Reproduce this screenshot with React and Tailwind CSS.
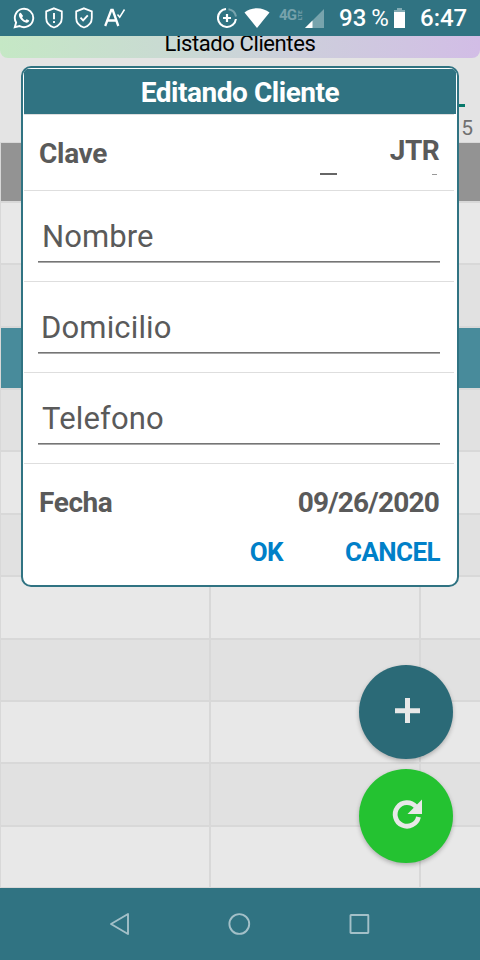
const rows = [
  { h: 'h-[60px]', tone: 'light' },
  { h: 'h-[61px]', tone: 'dark' },
  { h: 'h-[60px]', tone: 'selected' },
  { h: 'h-[60px]', tone: 'dark' },
  { h: 'h-[61px]', tone: 'light' },
  { h: 'h-[60px]', tone: 'dark' },
  { h: 'h-[61px]', tone: 'light' },
  { h: 'h-[60px]', tone: 'dark' },
  { h: 'h-[60px]', tone: 'light' },
  { h: 'h-[61px]', tone: 'dark' },
  { h: 'h-[60px]', tone: 'light' },
];

const tones = {
  light: 'bg-[#e8e8e8]',
  dark: 'bg-[#e1e1e1]',
  selected: 'bg-[#488b9b]',
};

const fields = [
  { label: 'Nombre', className: 'pl-[4px] tracking-[0.1px]' },
  { label: 'Domicilio', className: 'pl-[3px] tracking-[0.15px]' },
  { label: 'Telefono', className: 'pl-[4px] tracking-[0.15px]' },
];

function StatusBar() {
  return (
    <header className="flex h-9 shrink-0 items-center bg-[#307382] pl-[13px] pr-[13px] text-white">
      <svg className="h-[22px] w-[22px]" viewBox="0 0 22 22" fill="none" stroke="currentColor">
        <path d="M1.8 20.2 3.1 15.6A9.2 9.2 0 1 1 6.6 19Z" strokeWidth="1.9" />
        <path
          d="M7.8 5.8c-.5-.3-1.8.4-1.9 2-.2 3.2 4 7.6 7.500 7.9 1.6.1 2.7-.9 2.8-2.1l-2.5-1.400-1.3 1.3c-1.4-.5-2.7-1.8-3.3-3.2l1-1.3Z"
          fill="currentColor"
          stroke="none"
        />
      </svg>
      <svg className="ml-[10px] h-[22px] w-[18px]" viewBox="0 0 18 22" fill="none" stroke="currentColor" strokeWidth="1.8">
        <path d="M9 1.3 16.8 4.3V11c0 4.5-3.1 8-7.8 9.5C4.3 19 1.2 15.500 1.2 11V4.3Z" />
        <path d="M9 6v6.3M9 14v2" strokeWidth="1.9" />
      </svg>
      <svg className="ml-[12px] h-[22px] w-[18px]" viewBox="0 0 18 22" fill="none" stroke="currentColor" strokeWidth="1.8">
        <path d="M9 1.3 16.8 4.3V11c0 4.5-3.1 8-7.8 9.5C4.3 19 1.2 15.500 1.2 11V4.3Z" />
        <path d="m5.5 10.7 2.600 2.6 4.700-5" strokeWidth="1.9" />
      </svg>
      <svg className="ml-[11px] h-[20px] w-[22px]" viewBox="0 0 22 20" fill="none" stroke="currentColor">
        <path d="M1.200 18 7.300 2h1.400L14.300 18M3.700 12.500h8.200" strokeWidth="2.300" />
        <path d="m13.500 6.500 2.200 2.700L20.500 1.500" strokeWidth="1.500" />
      </svg>

      <svg className="ml-auto h-[20px] w-[20px]" viewBox="0 0 20 20" fill="none" stroke="currentColor" strokeWidth="2.100">
        <path d="M9 1a9 9 0 1 0 9.900 10" />
        <path d="M11.500 1.200A9 9 0 0 1 19 8.500" opacity=".35" />
        <path d="M10 6v8M6 10h8" strokeWidth="2.200" />
      </svg>
      <svg className="ml-[7px] h-[20px] w-[26px]" viewBox="0 0 26 20" fill="currentColor">
        <path d="M13 20 .5 4.600C3.800 1.900 8.200.3 13 .3s9.200 1.600 12.500 4.300Z" />
      </svg>
      <div className="ml-[9px] flex h-[20px] w-[26px] items-start text-white/35">
        <span className="text-[15px] font-bold leading-[14px] -tracking-[0.8px]">4G</span>
        <span className="text-[6px] font-bold leading-[7px] [writing-mode:vertical-rl] rotate-180 h-[12px]">LTE</span>
      </div>
      <svg className="h-[19px] w-[19px]" viewBox="0 0 19 19" fill="currentColor">
        <path d="M19 0v19H0Z" opacity=".35" />
        <path d="M7.500 11.500V19H0Z" />
      </svg>
      <span className="ml-[15px] w-[53px] whitespace-nowrap text-[24px] font-medium leading-9">
        93 <span className="-ml-px font-normal">%</span>
      </span>
      <svg className="ml-[2px] h-[20px] w-[11px]" viewBox="0 0 11 20" fill="currentColor">
        <path d="M3 0h5v2h3v2H0V2h3Z" opacity=".4" />
        <path d="M0 4h11v16H0Z" />
      </svg>
      <span className="ml-[15px] w-[47px] whitespace-nowrap text-[24px] font-medium leading-9">6:47</span>
    </header>
  );
}

function Grid() {
  return (
    <div className="flex flex-col border-l border-t border-[#d8d8d8] bg-[#d8d8d8]">
      <div className="mb-[2px] h-[58px] bg-[#939393]" />
      {rows.map((row, i) => (
        <div key={i} className={`mb-[2px] flex shrink-0 gap-[2px] last:mb-px ${row.h}`}>
          <div className={`w-[208px] ${tones[row.tone]}`} />
          <div className={`w-[208px] ${tones[row.tone]}`} />
          <div className={`flex-1 ${tones[row.tone]}`} />
        </div>
      ))}
    </div>
  );
}

function EditDialog() {
  return (
    <div className="absolute left-[21px] top-[66px] h-[521px] w-[438px] overflow-hidden rounded-[10px] border-2 border-[#307382] bg-white px-px text-[#5a5a5a]">
      <h2 className="h-[46px] bg-[#307382] text-center text-[28px] font-bold leading-[49px] text-white shadow-[inset_0_1px_0_#fff]">
        <span className="-tracking-[0.47px]">Editando Cliente</span>
      </h2>
      <div className="mr-[2px] flex h-[77px] justify-between border-y border-[#dedede] pl-[15px] pr-[14px] text-[28px] font-bold">
        <span className="-tracking-[0.3px] leading-[77px]">Clave</span>
        <div className="flex w-[120px] flex-col items-end">
          <span className="mr-px mt-[19px] leading-[33px] -tracking-[0.6px]">JTR</span>
          <div className="mt-[6px] flex w-full items-start justify-between pr-[3px]">
            <i className="h-[2px] w-[17px] bg-[#666]" />
            <i className="mt-px h-px w-[5px] bg-[#999]" />
          </div>
        </div>
      </div>
      {fields.map((field) => (
        <div key={field.label} className="mr-[2px] h-[91px] border-b border-[#dedede] pl-[14px] pr-[14px]">
          <div className="h-[72px] border-b border-[#a9a9a9]">
            <div className="h-[71px] border-b border-[#757575]">
              <span className={`block text-[31px] leading-[92px] ${field.className}`}>{field.label}</span>
            </div>
          </div>
        </div>
      ))}
      <div className="flex h-[77px] justify-between pl-[15px] pr-[17px] text-[28px] font-bold leading-[78px]">
        <span className="-tracking-[0.4px]">Fecha</span>
        <span className="-tracking-[0.8px]">09/26/2020</span>
      </div>
      <div className="flex justify-end gap-[62px] pr-[16px] text-[26px] font-bold leading-[22px] text-[#0080c8]">
        <button className="-tracking-[0.6px]">OK</button>
        <button className="-tracking-[0.6px]">CANCEL</button>
      </div>
    </div>
  );
}

export default function App() {
  return (
    <div className="relative flex h-[960px] w-[480px] flex-col overflow-hidden bg-[#e4e4e4] font-['Roboto',sans-serif]">
      <StatusBar />
      <div className="flex h-[22px] shrink-0 justify-center overflow-hidden rounded-b-[8px] bg-linear-to-r from-[#c5e8c5] via-[#cbd4d8] to-[#d2bde6]">
        <h1 className="-mt-[8px] text-[22px] leading-[32px] -tracking-[0.4px] text-black">Listado Clientes</h1>
      </div>
      <div className="flex h-[84px] shrink-0 flex-col items-end">
        <div className="mr-[15px] mt-[46px] h-[3px] w-[200px] shrink-0 bg-[#08796b]" />
        <span className="mr-[7px] mt-[8px] text-[21px] leading-[26px] text-[#707070]">5</span>
      </div>
      <Grid />
      <nav className="flex h-[72px] shrink-0 items-center bg-[#307382] pl-[109px] text-[#a3c0c8]">
        <svg className="h-[24px] w-[22px]" viewBox="0 0 22 24" fill="none" stroke="currentColor" strokeWidth="1.900">
          <path d="M19 2v20L2 12Z" strokeLinejoin="round" />
        </svg>
        <svg className="ml-[96px] h-[24px] w-[24px]" viewBox="0 0 24 24" fill="none" stroke="currentColor" strokeWidth="1.900">
          <circle cx="12.300" cy="12" r="9.900" />
        </svg>
        <svg className="ml-[96px] h-[24px] w-[24px]" viewBox="0 0 24 24" fill="none" stroke="currentColor" strokeWidth="1.900">
          <rect x="3.500" y="3" width="17.800" height="18" rx="0.500" />
        </svg>
      </nav>

      <EditDialog />

      <div className="absolute left-[359px] top-[665px] flex flex-col gap-[10px] text-[#e8e8e8]">
        <button className="h-[94px] w-[94px] rounded-full bg-[#2b6a77] shadow-[0_2px_4px_rgba(0,0,0,0.25)]">
          <svg className="h-[94px] w-[94px]" viewBox="0 0 94 94" fill="currentColor">
            <path d="M46 33h5v10.300h10v4.900H51V58h-5v-9.800H36v-4.900h10Z" />
          </svg>
        </button>
        <button className="h-[94px] w-[94px] rounded-full bg-[#24c231] shadow-[0_2px_4px_rgba(0,0,0,0.25)]">
          <svg className="h-[94px] w-[94px]" viewBox="0 0 94 94">
            <path d="M56.800 37.500A11.800 11.800 0 1 0 59.500 48" fill="none" stroke="currentColor" strokeWidth="4.800" />
            <path d="M63 30.500v14.500H48.500Z" fill="currentColor" />
          </svg>
        </button>
      </div>
    </div>
  );
}
